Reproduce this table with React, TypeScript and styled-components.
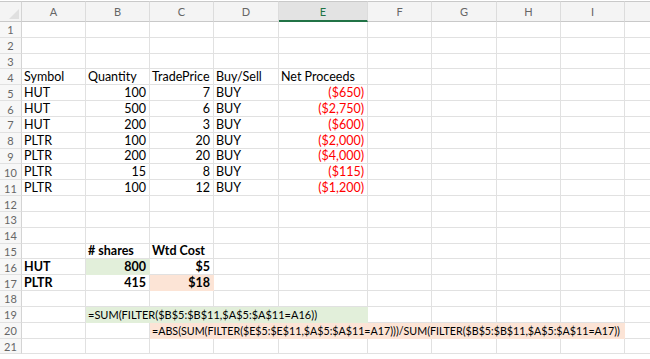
import styled, { createGlobalStyle } from "styled-components"

const GlobalStyle = createGlobalStyle`
  html, body {
    margin: 0;
    padding: 0;
    background: #ffffff;
  }
  body {
    font-family: "Lato", "Liberation Sans", sans-serif;
  }
`

const COLS = ["A", "B", "C", "D", "E", "F", "G", "H", "I", "J"]
const SELECTED_COL = 4
const ROW_COUNT = 21

type Fill = "green" | "peach"

interface CellDef {
  col: number
  span?: number
  text: string
  right?: boolean
  bold?: boolean
  red?: boolean
  fill?: Fill
  size?: number
}

const fills: Record<Fill, string> = {
  green: "#e2efda",
  peach: "#fce4d6",
}

const trade = (
  sym: string,
  qty: string,
  price: string,
  proceeds: string
): CellDef[] => [
  { col: 0, text: sym },
  { col: 1, text: qty, right: true },
  { col: 2, text: price, right: true },
  { col: 3, text: "BUY" },
  { col: 4, text: proceeds, right: true, red: true },
]

const sheet: Record<number, CellDef[]> = {
  4: [
    { col: 0, text: "Symbol" },
    { col: 1, text: "Quantity" },
    { col: 2, text: "TradePrice" },
    { col: 3, text: "Buy/Sell" },
    { col: 4, text: "Net Proceeds" },
  ],
  5: trade("HUT", "100", "7", "($650)"),
  6: trade("HUT", "500", "6", "($2,750)"),
  7: trade("HUT", "200", "3", "($600)"),
  8: trade("PLTR", "100", "20", "($2,000)"),
  9: trade("PLTR", "200", "20", "($4,000)"),
  10: trade("PLTR", "15", "8", "($115)"),
  11: trade("PLTR", "100", "12", "($1,200)"),
  15: [
    { col: 1, text: "# shares", bold: true },
    { col: 2, text: "Wtd Cost", bold: true },
  ],
  16: [
    { col: 0, text: "HUT", bold: true },
    { col: 1, text: "800", bold: true, right: true, fill: "green" },
    { col: 2, text: "$5", bold: true, right: true },
  ],
  17: [
    { col: 0, text: "PLTR", bold: true },
    { col: 1, text: "415", bold: true, right: true },
    { col: 2, text: "$18", bold: true, right: true, fill: "peach" },
  ],
  19: [
    {
      col: 1,
      span: 4,
      text: "=SUM(FILTER($B$5:$B$11,$A$5:$A$11=A16))",
      fill: "green",
      size: 11,
    },
  ],
  20: [
    {
      col: 2,
      span: 7,
      text: "=ABS(SUM(FILTER($E$5:$E$11,$A$5:$A$11=A17)))/SUM(FILTER($B$5:$B$11,$A$5:$A$11=A17))",
      fill: "peach",
      size: 10.7,
    },
  ],
}

const Sheet = styled.div`
  display: grid;
  grid-template-columns: 22px 64px 64px 64px 65px 89px 64px 65px 64px 64px 64px;
  grid-template-rows: 22px repeat(${ROW_COUNT}, 15.83px);
  width: 100%;
  height: 359px;
  overflow: hidden;
  background: #ffffff;
`

const Corner = styled.div`
  position: relative;
  margin-top: 1px;
  background: #f4f4f4;
  border-top: 1px solid #c9c9c9;
  border-right: 1px solid #d4d4d4;
  border-bottom: 1px solid #c9c9c9;
  &::after {
    content: "";
    position: absolute;
    right: 2px;
    bottom: 2px;
    width: 0;
    height: 0;
    border-left: 10px solid transparent;
    border-bottom: 10px solid #e0e0e0;
  }
`

const ColHead = styled.div<{ $active?: boolean }>`
  display: flex;
  align-items: center;
  justify-content: center;
  margin-top: 1px;
  background: ${(p) => (p.$active ? "#e3e3e3" : "#f4f4f4")};
  color: ${(p) => (p.$active ? "#217346" : "#666666")};
  font-size: 11px;
  border-top: 1px solid #c9c9c9;
  border-right: 1px solid #dcdcdc;
  border-bottom: ${(p) => (p.$active ? "2px solid #217346" : "1px solid #c9c9c9")};
`

const RowHead = styled.div`
  display: flex;
  align-items: center;
  justify-content: center;
  background: #f7f7f7;
  color: #666666;
  font-size: 11px;
  border-right: 1px solid #d4d4d4;
  border-bottom: 1px solid #e1e1e1;
  padding-top: 1px;
`

const Cell = styled.div<{
  $span: number
  $right?: boolean
  $bold?: boolean
  $red?: boolean
  $fill?: Fill
  $size?: number
}>`
  grid-column: span ${(p) => p.$span};
  display: flex;
  align-items: flex-end;
  justify-content: ${(p) => (p.$right ? "flex-end" : "flex-start")};
  padding: 0 3px 0 2px;
  overflow: hidden;
  white-space: nowrap;
  font-size: ${(p) => p.$size ?? 12.5}px;
  line-height: 15px;
  font-weight: ${(p) => (p.$bold ? 700 : 400)};
  color: ${(p) => (p.$red ? "#ff0000" : "#000000")};
  background: ${(p) => (p.$fill ? fills[p.$fill] : "transparent")};
  border-right: 1px solid ${(p) => (p.$fill ? fills[p.$fill] : "#e1e1e1")};
  border-bottom: 1px solid ${(p) => (p.$fill ? fills[p.$fill] : "#e1e1e1")};
`

function SheetRow({ row }: { row: number }) {
  const defs = sheet[row] ?? []
  const cells = []
  let c = 0
  while (c < COLS.length) {
    const def = defs.find((d) => d.col === c)
    const span = def?.span ?? 1
    cells.push(
      <Cell
        key={c}
        $span={span}
        $right={def?.right}
        $bold={def?.bold}
        $red={def?.red}
        $fill={def?.fill}
        $size={def?.size}
      >
        {def?.text}
      </Cell>
    )
    c += span
  }
  return (
    <>
      <RowHead>{row}</RowHead>
      {cells}
    </>
  )
}

export default function App() {
  const rows = Array.from({ length: ROW_COUNT }, (_, i) => i + 1)
  return (
    <>
      <GlobalStyle />
      <Sheet>
        <Corner />
        {COLS.map((c, i) => (
          <ColHead key={c} $active={i === SELECTED_COL}>
            {c}
          </ColHead>
        ))}
        {rows.map((r) => (
          <SheetRow key={r} row={r} />
        ))}
      </Sheet>
    </>
  )
}
